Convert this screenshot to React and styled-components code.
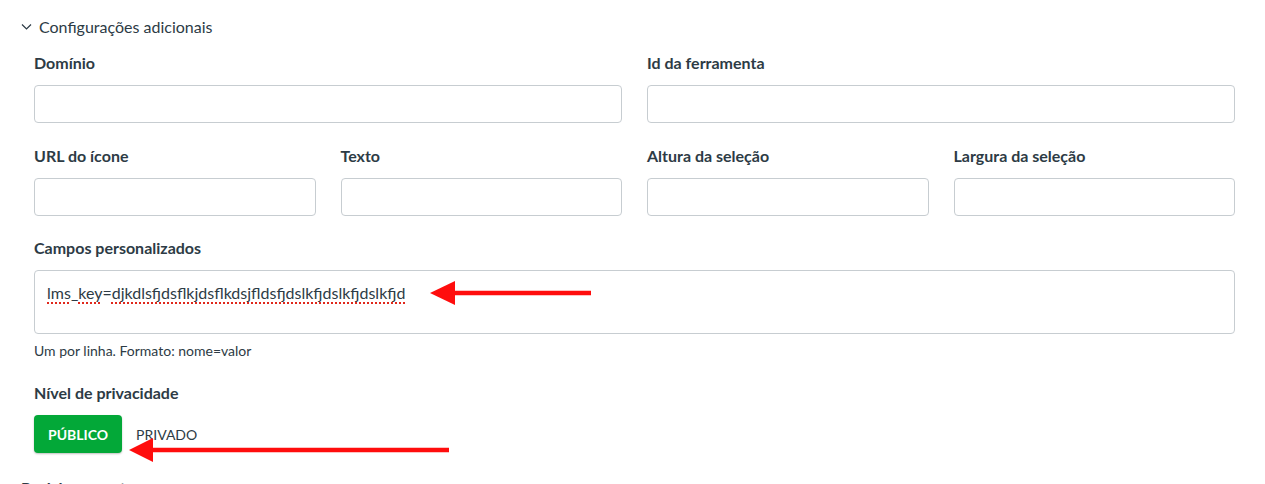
import React from 'react';
import styled, { createGlobalStyle } from 'styled-components';

const GlobalStyle = createGlobalStyle`
  html, body {
    margin: 0;
    padding: 0;
    background: #fff;
  }
  body {
    font-family: Lato, "Open Sans", "Liberation Sans", sans-serif;
    color: #2d3b45;
  }
`;

const Page = styled.div`
  position: relative;
  height: 484px;
  overflow: hidden;
  padding: 17px 30px 0 21px;
  box-sizing: border-box;
`;

const Toggle = styled.div`
  display: flex;
  align-items: center;
  gap: 7px;
  height: 20px;
  font-size: 16px;
  line-height: 20px;
  color: #2d3b45;
`;

const Body = styled.div`
  padding: 16px 0 0 13px;
  display: flex;
  flex-direction: column;
`;

const Grid = styled.div`
  display: grid;
  grid-template-columns: repeat(${(p) => p.cols}, 1fr);
  column-gap: 25px;
  margin-bottom: ${(p) => p.gapBelow || 24}px;
`;

const Field = styled.div`
  display: flex;
  flex-direction: column;
  min-width: 0;
`;

const Label = styled.label`
  display: block;
  height: 20px;
  font-size: 16px;
  line-height: 20px;
  font-weight: 700;
  color: #2d3b45;
  margin-bottom: ${(p) => p.gap || 12}px;
`;

const Input = styled.input`
  display: block;
  box-sizing: border-box;
  height: 38px;
  width: 100%;
  margin: 0;
  border: 1px solid #c7cdd1;
  border-radius: 4px;
  background: #fff;
  font-family: inherit;
  font-size: 16px;
  padding: 0 12px;
  outline: none;
`;

const TextArea = styled.div`
  box-sizing: border-box;
  height: 64px;
  border: 1px solid #c7cdd1;
  border-radius: 4px;
  padding: 11px 12px;
  font-size: 16px;
  line-height: 22px;
  color: #2d3b45;
`;

const Misspelled = styled.span`
  text-decoration: underline dotted #e0281c;
  text-decoration-thickness: 1.5px;
  text-underline-offset: 3px;
`;

const Hint = styled.div`
  height: 18px;
  font-size: 14px;
  line-height: 18px;
  color: #2d3b45;
  margin: 8px 0 23px;
`;

const Segmented = styled.div`
  display: flex;
  align-items: center;
  gap: 14px;
`;

const Choice = styled.button`
  height: 38px;
  box-sizing: border-box;
  border: none;
  border-radius: 4px;
  margin: 0;
  padding: 0 ${(p) => (p.active ? 14 : 0)}px;
  background: ${(p) => (p.active ? '#03a838' : 'transparent')};
  color: ${(p) => (p.active ? '#fff' : '#2d3b45')};
  box-shadow: ${(p) => (p.active ? '0 1px 2px rgba(0,0,0,0.25)' : 'none')};
  font-family: inherit;
  font-size: 14px;
  font-weight: ${(p) => (p.active ? 700 : 400)};
  cursor: pointer;
`;

const Section = styled.h3`
  margin: 23px 0 0 -13px;
  font-size: 16px;
  line-height: 24px;
  font-weight: 700;
  color: #2d3b45;
`;

const Annotations = styled.svg`
  position: absolute;
  left: 0;
  top: 0;
  pointer-events: none;
`;

const Chevron = () => (
  <svg width="11" height="8" viewBox="0 0 11 8">
    <polyline points="1,1.5 5.5,6 10,1.5" fill="none" stroke="#2d3b45" strokeWidth="1.2" />
  </svg>
);

export default function App() {
  return (
    <Page>
      <GlobalStyle />
      <Toggle>
        <Chevron />
        <span>Configurações adicionais</span>
      </Toggle>
      <Body>
        <Grid cols={2} gapBelow={23}>
          <Field>
            <Label>Domínio</Label>
            <Input />
          </Field>
          <Field>
            <Label>Id da ferramenta</Label>
            <Input />
          </Field>
        </Grid>
        <Grid cols={4} gapBelow={22}>
          <Field>
            <Label>URL do ícone</Label>
            <Input />
          </Field>
          <Field>
            <Label>Texto</Label>
            <Input />
          </Field>
          <Field>
            <Label>Altura da seleção</Label>
            <Input />
          </Field>
          <Field>
            <Label>Largura da seleção</Label>
            <Input />
          </Field>
        </Grid>
        <Field>
          <Label>Campos personalizados</Label>
          <TextArea>
            <Misspelled>lms</Misspelled>_<Misspelled>key</Misspelled>=
            <Misspelled>djkdlsfjdsflkjdsflkdsjfldsfjdslkfjdslkfjdslkfjd</Misspelled>
          </TextArea>
        </Field>
        <Hint>Um por linha. Formato: nome=valor</Hint>
        <Field>
          <Label>Nível de privacidade</Label>
          <Segmented>
            <Choice active>PÚBLICO</Choice>
            <Choice>PRIVADO</Choice>
          </Segmented>
        </Field>
        <Section>Posicionamentos</Section>
      </Body>
      <Annotations width="1265" height="484" viewBox="0 0 1265 484">
        <line x1="452" y1="293" x2="591" y2="293" stroke="#ff0d0d" strokeWidth="4.5" />
        <polygon points="430,293 455,281 455,305" fill="#ff0d0d" />
        <line x1="150" y1="450" x2="449" y2="450" stroke="#ff0d0d" strokeWidth="4.5" />
        <polygon points="129,450 153,438 153,462" fill="#ff0d0d" />
      </Annotations>
    </Page>
  );
}
